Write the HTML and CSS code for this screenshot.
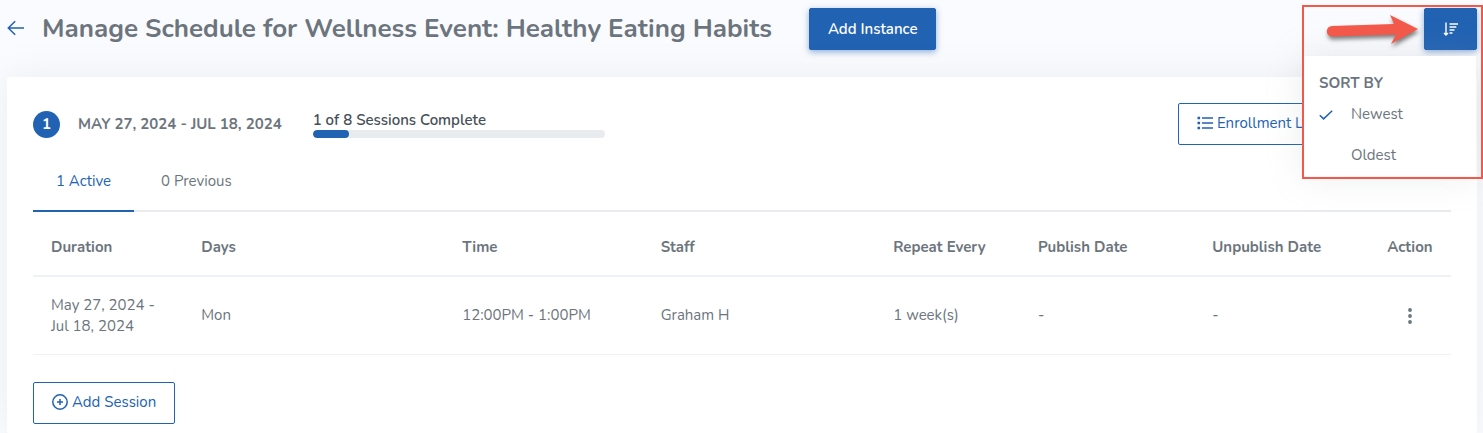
FILE: index.html
```
<!DOCTYPE html>
<html lang="en">
<head>
    <meta charset="UTF-8">
    <meta name="viewport" content="width=device-width, initial-scale=1.0">
    <title>Manage Schedule</title>
    <link rel="stylesheet" href="styles.css">
</head>
<body>
    <header class="page-header">
        <a href="#" class="back" aria-label="Back">
            <svg width="18" height="16" viewBox="0 0 18 16"><path d="M17 8H1.5M8.2 1.2L1.3 8l6.9 6.8"/></svg>
        </a>
        <h1>Manage Schedule for Wellness Event: Healthy Eating Habits</h1>
        <button type="button" class="btn btn-primary">Add Instance</button>

        <div class="sort">
            <button type="button" class="btn btn-primary btn-sort" aria-label="Sort">
                <svg width="16" height="14" viewBox="0 0 16 14">
                    <path d="M3 .5v12M1 11l2 2 2-2" stroke-width="1.4"/>
                    <path d="M6.5 2H15M6.5 5h6.8M6.5 8h5M6.5 11h3" stroke-width="1.5"/>
                </svg>
            </button>
            <div class="sort-menu">
                <h2>SORT BY</h2>
                <button type="button" class="sort-item">
                    <svg width="14" height="10" viewBox="0 0 14 10"><path d="M.8 5.2l3.8 3.7L13.2.8"/></svg>
                    Newest
                </button>
                <button type="button" class="sort-item">Oldest</button>
            </div>
            <div class="callout">
                <svg width="96" height="34" viewBox="0 0 96 34">
                    <path d="M6 12L68 10L64 1L92 15L65 30L70 20.5L6 22.4A5 5 0 0 1 6 12Z"/>
                </svg>
            </div>
        </div>
    </header>

    <main class="card">
        <div class="instance">
            <span class="number">1</span>
            <span class="dates">MAY 27, 2024 - JUL 18, 2024</span>
            <div class="progress">
                <span>1 of 8 Sessions Complete</span>
                <div class="bar"><div class="bar-fill" style="width: 12.5%"></div></div>
            </div>
            <button type="button" class="btn btn-outline btn-enroll">
                <svg width="16" height="14" viewBox="0 0 16 14">
                    <path d="M5 2h11M5 7h11M5 12h11"/>
                    <path d="M.5 2h2.6M.5 7h2.6M.5 12h2.6" stroke-width="2.6"/>
                </svg>
                Enrollment List
            </button>
        </div>

        <nav class="tabs">
            <a href="#" class="tab active">1 Active</a>
            <a href="#" class="tab">0 Previous</a>
        </nav>

        <table>
            <thead>
                <tr>
                    <th class="col-duration">Duration</th>
                    <th class="col-days">Days</th>
                    <th class="col-time">Time</th>
                    <th class="col-staff">Staff</th>
                    <th class="col-repeat">Repeat Every</th>
                    <th class="col-publish">Publish Date</th>
                    <th class="col-publish">Unpublish Date</th>
                    <th class="col-action">Action</th>
                </tr>
            </thead>
            <tbody>
                <tr>
                    <td>May 27, 2024 -<br>Jul 18, 2024</td>
                    <td>Mon</td>
                    <td>12:00PM - 1:00PM</td>
                    <td>Graham H</td>
                    <td>1 week(s)</td>
                    <td>-</td>
                    <td>-</td>
                    <td class="col-action">
                        <button type="button" class="more" aria-label="Actions">
                            <svg width="4" height="16" viewBox="0 0 4 16"><circle cx="2" cy="2" r="1.9"/><circle cx="2" cy="8" r="1.9"/><circle cx="2" cy="14" r="1.9"/></svg>
                        </button>
                    </td>
                </tr>
            </tbody>
        </table>

        <button type="button" class="btn btn-outline">
            <svg width="16" height="16" viewBox="0 0 16 16"><circle cx="8" cy="8" r="7.2"/><path d="M8 5v6M5 8h6"/></svg>
            Add Session
        </button>
    </main>
</body>
</html>
```
FILE: styles.css
```
* {
    box-sizing: border-box;
}
body {
    display: flex;
    flex-direction: column;
    min-height: 100vh;
    margin: 0;
    font-family: Nunito, "Noto Sans", sans-serif;
    font-size: 15px;
    line-height: 21px;
    color: #6c757d;
    background-color: #fafbfe;
}
a {
    text-decoration: none;
}
svg {
    fill: none;
    stroke: currentColor;
    stroke-width: 1.5;
    flex-shrink: 0;
}
.page-header {
    display: flex;
    align-items: center;
    padding: 8px 6px 27px 7px;
}
.back {
    display: flex;
    width: 35px;
    padding-bottom: 2px;
    color: #2162b3;
}
h1 {
    margin: 0 37px 0 0;
    font-size: 26px;
    line-height: 42px;
    font-weight: 700;
    white-space: nowrap;
}
.btn {
    display: inline-flex;
    align-items: center;
    justify-content: center;
    gap: 4px;
    height: 42px;
    padding: 0 18px;
    border: 1px solid #2162b3;
    border-radius: 2px;
    font: inherit;
    white-space: nowrap;
    cursor: pointer;
}
.btn-primary {
    color: #fff;
    font-weight: 600;
    background-color: #2162b3;
    box-shadow: 0 2px 6px 0 rgba(33, 98, 179, 0.5);
}
.btn-outline {
    padding-bottom: 2px;
    color: #2162b3;
    background-color: #fff;
}

/* sort dropdown */
.sort {
    position: relative;
    margin-left: auto;
}
.btn-sort {
    width: 53px;
}
.sort-menu {
    position: absolute;
    z-index: 1;
    top: 48px;
    right: 1px;
    width: 173px;
    padding: 17px 0 0;
    background-color: #fff;
    box-shadow: 0 0 35px 0 rgba(154, 161, 171, 0.2);
}
.sort-menu h2 {
    margin: 0;
    padding: 0 16px;
    font-size: 15px;
    line-height: 21px;
}
.sort-item {
    display: flex;
    align-items: center;
    gap: 18px;
    width: 100%;
    height: 41px;
    padding: 0 16px 0 48px;
    border: none;
    color: inherit;
    font: inherit;
    background: none;
    cursor: pointer;
}
.sort-item svg {
    margin-left: -32px;
    color: #2162b3;
}
.callout {
    position: absolute;
    z-index: 2;
    top: -3px;
    right: -6px;
    width: 181px;
    height: 174px;
    padding: 7px 0 0 22px;
    border: 2px solid #f2594b;
    pointer-events: none;
}
.callout svg {
    fill: #f2594b;
    stroke: none;
    filter: drop-shadow(1px 3px 2px rgba(0, 0, 0, 0.5));
}

.card {
    flex: 1;
    margin: 0 6px 0 7px;
    padding: 26px 26px 0;
    background-color: #fff;
    border-radius: 2px;
    box-shadow: 0 0 35px 0 rgba(154, 161, 171, 0.15);
}
.instance {
    display: flex;
    align-items: center;
}
.number {
    width: 27px;
    height: 27px;
    border-radius: 50%;
    color: #fff;
    font-weight: 700;
    line-height: 26px;
    text-align: center;
    background-color: #2162b3;
}
.dates {
    margin: 0 31px 0 18px;
    font-weight: 700;
}
.progress {
    width: 292px;
    color: #464f58;
    font-weight: 600;
    line-height: 20px;
}
.bar {
    height: 8px;
    border-radius: 4px;
    background-color: #e9ecef;
    overflow: hidden;
}
.bar-fill {
    height: 100%;
    border-radius: 4px;
    background-color: #2162b3;
}
.btn-enroll {
    width: 160px;
    margin: 0 113px 0 auto;
}

.tabs {
    display: flex;
    gap: 4px;
    margin-top: 6px;
    border-bottom: 2px solid #e9ecef;
}
.tab {
    margin-bottom: -2px;
    padding: 20px 23px 18px;
    color: inherit;
}
.tab.active {
    color: #2162b3;
    border-bottom: 2px solid #2162b3;
}

table {
    width: 100%;
    margin-bottom: 27px;
    border-collapse: separate;
    border-spacing: 0;
    table-layout: fixed;
}
th, td {
    padding: 17px 18px;
    text-align: left;
    white-space: nowrap;
    border-bottom: 1px solid #eef2f7;
}
th {
    padding-top: 25px;
    border-bottom: 2px solid #eef2f7;
}
td {
    height: 78px;
}
.col-duration { width: 10.6%; }
.col-days { width: 18.4%; }
.col-time { width: 14%; }
.col-staff { width: 16.4%; }
.col-repeat { width: 10.2%; }
.col-publish { width: 12.3%; }
.col-action {
    text-align: center;
}
.more {
    display: block;
    margin: 0 auto;
    padding: 0;
    border: none;
    color: inherit;
    background: none;
    cursor: pointer;
}
.more svg {
    display: block;
    fill: currentColor;
    stroke: none;
}
```
